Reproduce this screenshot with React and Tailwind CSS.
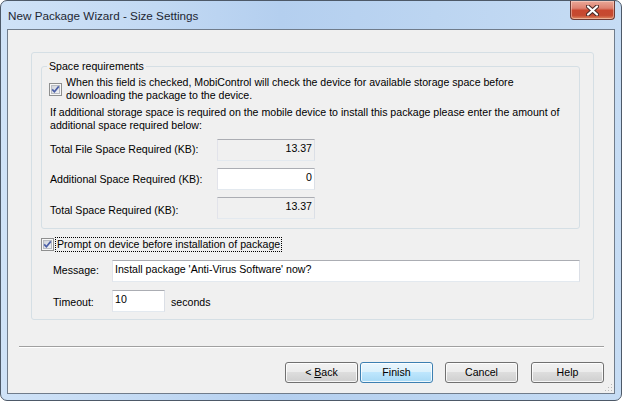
import React from "react";

// Win7-style "New Package Wizard - Size Settings" dialog

function CheckBox({ id }) {
  return (
    <svg width="13" height="13" viewBox="0 0 13 13" className="shrink-0">
      <defs>
        <linearGradient id={id} x1="0" y1="0" x2="1" y2="1">
          <stop offset="0" stopColor="#cdd1d8" />
          <stop offset="1" stopColor="#f4f5f7" />
        </linearGradient>
      </defs>
      <rect x="0.5" y="0.5" width="12" height="12" fill="#f7f7f7" stroke="#8e8f8f" />
      <rect x="2.5" y="2.5" width="8" height="8" fill={`url(#${id})`} stroke="#b9bcc2" />
      <path d="M3.2 6.4 L5.4 8.8 L9.8 3.4" fill="none" stroke="#4b5fa8" strokeWidth="1.7" />
    </svg>
  );
}

function TextBox({ readOnly = false, right = false, className = "", children }) {
  return (
    <div
      className={`h-[22px] shrink-0 overflow-hidden whitespace-nowrap border border-[#abadb3] border-l-[#e2e3ea] border-r-[#dbdfe6] border-b-[#e3e9ef] px-[2px] pt-[2px] leading-[13px] ${
        readOnly ? "bg-[#f0f0f0]" : "bg-white"
      } ${right ? "text-right" : ""} ${className}`}
    >
      {children}
    </div>
  );
}

function Button({ primary = false, children, className = "" }) {
  return (
    <div
      className={`flex h-[21px] w-[73px] items-center justify-center rounded-[3px] border leading-[13px] shadow-[inset_0_0_0_1px_rgba(255,255,255,0.8)] ${
        primary
          ? "border-[#3c7fb1] bg-[linear-gradient(#eaf6fd_0%,#d9f0fc_50%,#bee6fd_50%,#a7d9f5_100%)]"
          : "border-[#707070] bg-[linear-gradient(#f2f2f2_0%,#ebebeb_50%,#dddddd_50%,#cfcfcf_100%)]"
      } ${className}`}
    >
      {children}
    </div>
  );
}

function CloseButton() {
  return (
    <div className="flex h-[19px] w-[45px] items-center justify-center rounded-b-[4px] border border-t-0 border-[#6d3b35] bg-[linear-gradient(#eaa898_0%,#de8170_40%,#c8472f_52%,#c54a31_80%,#df8a63_100%)] shadow-[inset_0_0_0_1px_rgba(255,230,220,0.45)]">
      <svg width="13" height="11" viewBox="0 0 13 11">
        <path d="M2 1.5 L11 9.5 M11 1.5 L2 9.5" stroke="#4a2b28" strokeWidth="4.2" strokeLinecap="round" />
        <path d="M2 1.5 L11 9.5 M11 1.5 L2 9.5" stroke="#ffffff" strokeWidth="2.2" strokeLinecap="round" />
      </svg>
    </div>
  );
}

const ROWS = [
  { label: "Total File Space Required (KB):", value: "13.37", readOnly: true, pt: "pt-[4px]" },
  { label: "Additional Space Required (KB):", value: "0", readOnly: false, pt: "pt-[5px]" },
  { label: "Total Space Required (KB):", value: "13.37", readOnly: true, pt: "pt-[7px]" },
];

export default function App() {
  return (
    <div className="h-[401px] w-[622px] font-['Liberation_Sans',Arial,sans-serif] text-[10.6px] text-black">
      <div className="flex h-full flex-col rounded-[7px] border border-[#4d5968] bg-[linear-gradient(90deg,#cfe2f7_0%,#c2d9f3_25%,#b4cfef_45%,#bcd5f1_70%,#c6dcf4_100%)] px-[6px] pb-[6px]">
        {/* title bar */}
        <div className="flex h-[28px] shrink-0 items-start justify-between">
          <span className="pl-[1px] pt-[7px] text-[11.7px] leading-[15px] text-[#1e2733]">
            New Package Wizard - Size Settings
          </span>
          <CloseButton />
        </div>

        {/* client area */}
        <div className="relative flex flex-1 flex-col border border-[#707c8b] bg-[#f0f0f0]">
          {/* outer panel */}
          <div className="ml-[23px] mr-[20px] mt-[22px] h-[268px] rounded-[3px] border border-[#d5dfe5] pl-[9px] pr-[13px] pt-[7px]">
            <fieldset className="rounded-[3px] border border-[#d5dfe5] pb-[9px] pl-[7px]">
              <legend className="-ml-[2px] px-[2px] leading-[13px]">Space requirements</legend>

              <div className="mt-[3px] flex items-center gap-[4px]">
                <CheckBox id="cb1" />
                <div className="whitespace-nowrap leading-[13px]">
                  When this field is checked, MobiControl will check the device for available storage space before
                  <br />
                  downloading the package to the device.
                </div>
              </div>

              <div className="mt-[4px] whitespace-nowrap pl-[1px] leading-[13px]">
                If additional storage space is required on the mobile device to install this package please enter the amount of
                <br />
                additional space required below:
              </div>

              <div className="mt-[7px] flex flex-col gap-[7px] pl-[1px]">
                {ROWS.map((r) => (
                  <div key={r.label} className="flex items-start">
                    <span className={`w-[167px] leading-[13px] ${r.pt}`}>{r.label}</span>
                    <TextBox readOnly={r.readOnly} right className="w-[98px]">
                      {r.value}
                    </TextBox>
                  </div>
                ))}
              </div>
            </fieldset>

            {/* prompt checkbox */}
            <div className="mt-[8px] flex items-center gap-[1px]">
              <CheckBox id="cb2" />
              <span className="border border-dotted border-black px-[1px] leading-[13px]">
                Prompt on device before installation of package
              </span>
            </div>

            <div className="mt-[8px] flex items-start">
              <span className="w-[59px] shrink-0 pl-[12px] pt-[4px] leading-[13px] box-content">Message:</span>
              <TextBox className="flex-1">Install package 'Anti-Virus Software' now?</TextBox>
            </div>

            <div className="mt-[8px] flex items-start">
              <span className="w-[59px] shrink-0 pl-[12px] pt-[6px] leading-[13px] box-content">Timeout:</span>
              <TextBox className="w-[53px]">10</TextBox>
              <span className="pl-[6px] pt-[6px] leading-[13px]">seconds</span>
            </div>
          </div>

          {/* separator */}
          <div className="ml-[11px] mr-[10px] mt-[26px] border-t border-b border-t-[#a0a0a0] border-b-white" />

          {/* buttons */}
          <div className="mr-[10px] mt-[14px] flex justify-end">
            <Button>
              &lt;&nbsp;<span className="underline">B</span>ack
            </Button>
            <Button primary className="ml-[2px]">
              Finish
            </Button>
            <Button className="ml-[12px]">Cancel</Button>
            <Button className="ml-[13px]">Help</Button>
          </div>

          {/* size grip */}
          <svg width="9" height="9" viewBox="0 0 9 9" className="absolute bottom-[1px] right-[1px]">
            <g fill="#b8b8b8">
              <rect x="7" y="1" width="1" height="1" />
              <rect x="4" y="4" width="1" height="1" />
              <rect x="7" y="4" width="1" height="1" />
              <rect x="1" y="7" width="1" height="1" />
              <rect x="4" y="7" width="1" height="1" />
              <rect x="7" y="7" width="1" height="1" />
            </g>
          </svg>
        </div>
      </div>
    </div>
  );
}
